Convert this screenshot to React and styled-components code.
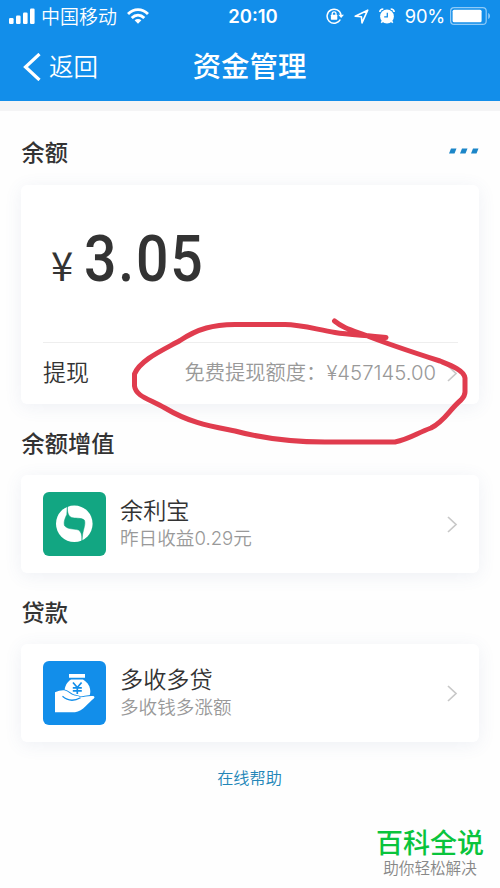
import { styled, createGlobalStyle } from 'styled-components';

const GlobalStyle = createGlobalStyle`
  * {
    box-sizing: border-box;
  }

  body {
    margin: 0;
    background: #fefefe;
    color: #333;
    font-family: Inter, "Noto Sans CJK SC", sans-serif;
  }
`;

const products = [
  {
    heading: "余额增值",
    title: "余利宝",
    desc: "昨日收益0.29元",
    color: "#12a682",
    Icon: YulibaoIcon,
  },
  {
    heading: "贷款",
    title: "多收多贷",
    desc: "多收钱多涨额",
    color: "#128eea",
    Icon: LoanIcon,
  },
];

function YulibaoIcon() {
  return (
    <svg width="63" height="64" viewBox="0 0 63 64">
      <circle cx="31.3" cy="31.8" r="18.3" fill="#fff" />
      <path
        d="M24.800 13C23.800 18 24.800 23.500 28 25.300C32 26.800 38 25.300 41.300 28C43 31.500 40.500 37 39.700 42Q39 46 38.800 51C39.200 45 38.800 40 35.500 38C31 36.700 25 37.500 21.700 34C20 30 22.500 25.500 23.800 22.500C24 19 24 16 24.800 13Z"
        fill="#12a682"
        stroke="#12a682"
        strokeWidth="0.5"
      />
    </svg>
  )
}

function LoanIcon() {
  return (
    <svg width="63" height="64" viewBox="0 0 63 64" fill="#fff">
      <path d="M26 13h16v3.800H26z" />
      <path d="M28 18.500h12c4.800 3 7.200 7 7.300 12c0 2.200-.5 4-1.500 5.500H24c-2-2-2.500-3.500-2.500-5.500c0-5 2.500-9.500 6.500-12Z" />
      <path
        d="M30 21.500l4.300 5l4.300-5M34.300 26.500v6.500M29.800 26.800h9M29.800 29.800h9"
        fill="none"
        stroke="#128eea"
        strokeWidth="1.7"
      />
      <path
        d="M12 31.300c3.500-1.500 7-2.300 10-1.800c3.500 1 5.500 4 9.500 5c2.500.5 4.500.3 6 1.800c4-.3 8-1.800 12.500-1.300c1.500.2 2 1.400.8 2.600C46 41 40 50.500 32 51.200H12Z"
        stroke="#128eea"
        strokeWidth="1.800"
        paintOrder="stroke"
      />
      <path
        d="M19.500 35.300c5 4.500 11.500 5 18 1.500"
        fill="none"
        stroke="#128eea"
        strokeWidth="1.300"
      />
    </svg>
  )
}

const SignalIcon = () => (
  <svg width="26" height="16" viewBox="0 0 26 16" fill="#fff">
    <rect x="0" y="10" width="4.600" height="6" rx="1.200" />
    <rect x="7" y="7.500" width="4.600" height="8.500" rx="1.200" />
    <rect x="14" y="4.500" width="4.600" height="11.500" rx="1.200" />
    <rect x="21" y="0.500" width="4.600" height="15.500" rx="1.200" />
  </svg>
)

const WifiIcon = () => (
  <svg width="22" height="16" viewBox="0 0 22 16">
    <g fill="none" stroke="#fff" strokeWidth="2.900">
      <path d="M1 6C6.800.2 15.200.2 21 6" />
      <path d="M4.700 10C8.500 6.300 13.500 6.300 17.300 10" />
    </g>
    <path d="M7.600 12.300c2-1.800 4.800-1.800 6.800 0L11 15.700Z" fill="#fff" />
  </svg>
)

const RotationLockIcon = () => (
  <svg width="18" height="16" viewBox="0 0 18 16">
    <path d="M14.300 11.500A7 7 0 1 1 15 7" fill="none" stroke="#fff" strokeWidth="1.500" />
    <path d="M12.300 6.800H18L15.100 10Z" fill="#fff" />
    <rect x="4.900" y="6.700" width="6.400" height="5" rx=".6" fill="#fff" />
    <path d="M6.200 7V5.700a1.900 1.900 0 0 1 3.800 0V7" fill="none" stroke="#fff" strokeWidth="1.300" />
  </svg>
)

const LocationIcon = () => (
  <svg width="15" height="15" viewBox="0 0 15 15">
    <path d="M1.200 7.300L13.700 1.200L8 13.800L7.400 7.700Z" fill="none" stroke="#fff" strokeWidth="1.600" strokeLinejoin="round" />
  </svg>
)

const AlarmIcon = () => (
  <svg width="16" height="16" viewBox="0 0 16 16">
    <circle cx="8" cy="8.500" r="6.900" fill="#fff" />
    <path d="M.8 4C1 2.300 2.500 1 4.300 1M15.200 4C15 2.300 13.500 1 11.700 1M3.600 13l-1.300 1.800M12.400 13l1.300 1.800" fill="none" stroke="#fff" strokeWidth="1.600" />
    <path d="M8.300 4.700v4.200H5.200" fill="none" stroke="#128eea" strokeWidth="1.300" />
  </svg>
)

const BatteryIcon = () => (
  <svg width="41" height="18" viewBox="0 0 41 18">
    <rect x=".6" y=".6" width="35.600" height="16.800" rx="3.500" fill="none" stroke="#8fcaf7" strokeWidth="1.200" />
    <rect x="2.600" y="2.800" width="29" height="12.400" rx="1.500" fill="#fff" />
    <path d="M38.200 6c2.400 1 2.400 5 0 6Z" fill="#8fcaf7" />
  </svg>
)

const Chevron = () => (
  <svg width="11" height="17" viewBox="0 0 11 17">
    <path d="M1 1l8 7.500L1 16" fill="none" stroke="#c8c8c8" strokeWidth="1.700" />
  </svg>
)

const App = () => {
  return (
    <Page>
      <GlobalStyle />
      <Header>
        <StatusBar>
          <StatusSide>
            <SignalIcon />
            <Carrier>中国移动</Carrier>
            <WifiIcon />
          </StatusSide>
          <Clock>20:10</Clock>
          <StatusSide $end>
            <RotationLockIcon />
            <LocationIcon />
            <AlarmIcon />
            <Percent>90%</Percent>
            <BatteryIcon />
          </StatusSide>
        </StatusBar>
        <NavBar>
          <Back>
            <svg width="18" height="28" viewBox="0 0 18 28">
              <path d="M16.500 1L2.500 14L16.500 27" fill="none" stroke="#fff" strokeWidth="3.200" />
            </svg>
            返回
          </Back>
          <Title>资金管理</Title>
        </NavBar>
      </Header>

      <Content>
        <Heading>
          余额
          <svg width="30" height="6" viewBox="0 0 30 6" fill="#1c86c8">
            <path d="M2 .5h5.500L5.500 5.500H0ZM13 .5h5.500l-2 5H11ZM24 .5h5.500l-2 5H22Z" />
          </svg>
        </Heading>
        <BalanceCard>
          <Amount>
            <Currency>¥</Currency>
            <Figure>3.05</Figure>
          </Amount>
          <Withdraw>
            <WithdrawLabel>提现</WithdrawLabel>
            <Quota>
              免费提现额度：<QuotaValue>¥457145.00</QuotaValue>
            </Quota>
            <Chevron />
          </Withdraw>
          <Annotation width="340" height="128" viewBox="130 317 340 128">
            <path d="M386 337.500C365 335 350 335 335 332.500C315 329 300 324.500 285 324.500L235 324.500C213 325 199 328 180 340.500C163 350 140 360 134.500 374V386C136 397 150 399 165 408C190 423 210 426 235 431C265 439 295 442 325 442H395C410 439 417 433 431 428C445 421 449 410 461 400Q465 396 465 392V378C464 370 450 365 440 361C415 353 385 343 365 335C351 330 343 328 334.500 321" />
          </Annotation>
        </BalanceCard>

        {products.map(({ heading, title, desc, color, Icon }) => (
          <section key={title}>
            <Heading>{heading}</Heading>
            <ProductCard>
              <Badge $color={color}>
                <Icon />
              </Badge>
              <ProductText>
                <ProductTitle>{title}</ProductTitle>
                <ProductDesc>{desc}</ProductDesc>
              </ProductText>
              <Chevron />
            </ProductCard>
          </section>
        ))}

        <HelpLink>在线帮助</HelpLink>
      </Content>

      <Watermark>
        <Brand>百科全说</Brand>
        <Slogan>助你轻松解决</Slogan>
      </Watermark>
    </Page>
  )
};

const Page = styled.div`
  position: relative;
  width: 500px;
  height: 888px;
  overflow: hidden;
  background: #fefefe;
`;

const Header = styled.header`
  height: 111px;
  color: #fff;
  background: #128eea;
  border-bottom: 10px solid #f4f4f5;
`;

const StatusBar = styled.div`
  display: grid;
  grid-template-columns: 1fr auto 1fr;
  align-items: center;
  height: 32px;
  padding: 0 9px;
`;

const StatusSide = styled.div`
  display: flex;
  align-items: center;
  justify-content: ${({ $end }) => ($end ? "flex-end" : "flex-start")};
  gap: ${({ $end }) => ($end ? "0" : "6px")};

  svg {
    flex: none;
    margin-right: ${({ $end }) => ($end ? "10px" : "0")};
  }

  svg:last-child {
    margin-right: 0;
  }
`;

const Carrier = styled.span`
  margin-right: 4px;
  padding-top: 3px;
  font-size: 19px;
  font-weight: 350;
  line-height: 29px;
`;

const Clock = styled.span`
  padding-left: 6px;
  font-size: 18.5px;
  font-weight: 600;
  line-height: 32px;
`;

const Percent = styled.span`
  margin-right: 5px;
  padding-top: 1px;
  font-size: 18.3px;
  letter-spacing: -0.2px;
  line-height: 31px;
`;

const NavBar = styled.nav`
  display: grid;
  grid-template-columns: 1fr auto 1fr;
  align-items: center;
  height: 69px;
  padding-left: 23px;
  padding-right: 24px;
`;

const Back = styled.div`
  display: flex;
  align-items: center;
  gap: 8px;
  font-size: 24.5px;
  font-weight: 350;
  line-height: 36px;
`;

const Title = styled.h1`
  margin: 0;
  font-size: 28.4px;
  font-weight: 500;
  line-height: 40px;
`;

const Content = styled.main`
  padding: 6px 21px 0;
`;

const Heading = styled.h2`
  display: flex;
  align-items: center;
  justify-content: space-between;
  height: 68px;
  margin: 0;
  padding-left: 0.6px;
  font-size: 23.2px;
  font-weight: 500;

  section & {
    height: 71px;
    padding-top: 4px;
  }
`;

const Card = styled.div`
  background: #fff;
  border-radius: 6px;
  box-shadow: 0 3px 18px rgba(80, 100, 160, 0.09);
`;

const BalanceCard = styled(Card)`
  position: relative;
  height: 219px;
  padding: 0 21px 0 22px;
`;

const Amount = styled.div`
  display: flex;
  align-items: baseline;
  height: 158px;
  padding: 37px 0 0 8px;
  border-bottom: 1px solid #eee;
`;

const Currency = styled.span`
  width: 33px;
  font-family: "Noto Sans CJK SC", sans-serif;
  font-size: 40px;
  line-height: 74px;
`;

const Figure = styled.span`
  font-family: Roboto, sans-serif;
  font-size: 65px;
  font-weight: 500;
  line-height: 74px;
  letter-spacing: 2px;
  transform: scaleX(0.88);
  transform-origin: left;
`;

const Withdraw = styled.div`
  display: flex;
  align-items: center;
  height: 60px;
`;

const WithdrawLabel = styled.span`
  flex: 1;
  font-size: 23px;
  font-weight: 350;
  line-height: 32px;
`;

const Quota = styled.span`
  display: flex;
  margin-right: 11px;
  color: #999;
  font-size: 20.3px;
  font-weight: 350;
  line-height: 30px;
`;

const QuotaValue = styled.span`
  font-size: 20.3px;
`;

const Annotation = styled.svg`
  position: absolute;
  left: 109px;
  top: 132px;

  path {
    fill: none;
    stroke: #e03c4e;
    stroke-width: 5;
    stroke-linecap: round;
    stroke-linejoin: round;
  }
`;

const ProductCard = styled(Card)`
  display: flex;
  align-items: center;
  height: 98px;
  padding: 0 21px 0 22px;
`;

const Badge = styled.div`
  width: 63px;
  height: 64px;
  overflow: hidden;
  border-radius: 6px;
  background: ${({ $color }) => $color};
`;

const ProductText = styled.div`
  flex: 1;
  padding-left: 14px;
`;

const ProductTitle = styled.div`
  font-size: 23.2px;
  font-weight: 350;
  line-height: 28px;
`;

const ProductDesc = styled.div`
  color: #999;
  font-size: 18.6px;
  font-weight: 350;
  line-height: 26px;
`;

const HelpLink = styled.a`
  display: block;
  margin-top: 23px;
  padding-right: 1px;
  color: #2386b8;
  font-size: 16.2px;
  font-weight: 350;
  line-height: 26px;
  text-align: center;
`;

const Watermark = styled.div`
  position: absolute;
  right: 15px;
  bottom: 9px;
  width: 110px;
  text-align: center;
  white-space: nowrap;
`;

const Brand = styled.div`
  color: #0ac43c;
  font-size: 27px;
  font-weight: 500;
  line-height: 30px;
`;

const Slogan = styled.div`
  color: #888;
  font-size: 15.6px;
  font-weight: 350;
  line-height: 20px;
`;

export default App
